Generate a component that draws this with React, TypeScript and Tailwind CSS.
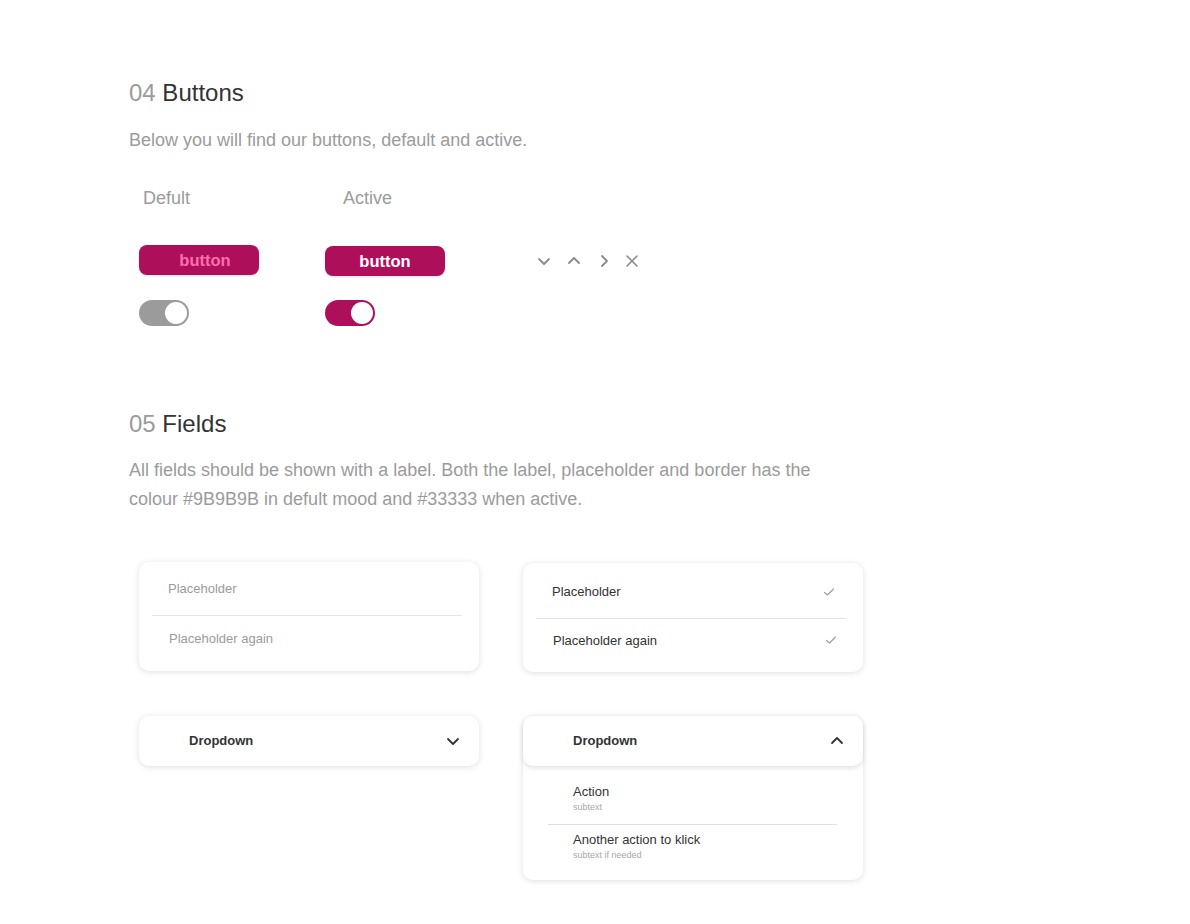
import { ReactNode } from 'react';

const font = "font-['Liberation_Sans',Arial,sans-serif]";

function Chevron({ dir, className = '' }: { dir: 'down' | 'up' | 'right'; className?: string }) {
  const d =
    dir === 'down' ? 'M2 5l5 5 5-5' : dir === 'up' ? 'M2 9l5-5 5 5' : 'M5 2l5 5-5 5';
  return (
    <svg width="14" height="14" viewBox="0 0 14 14" fill="none" className={className}>
      <path d={d} stroke="currentColor" strokeWidth="1.8" strokeLinecap="round" strokeLinejoin="round" />
    </svg>
  );
}

function Close() {
  return (
    <svg width="14" height="14" viewBox="0 0 14 14" fill="none">
      <path d="M2 2l10 10M12 2L2 12" stroke="currentColor" strokeWidth="1.6" strokeLinecap="round" />
    </svg>
  );
}

function Check() {
  return (
    <svg width="12" height="10" viewBox="0 0 12 10" fill="none">
      <path d="M1.5 5.5l3 2.5 6-6" stroke="#9b9b9b" strokeWidth="1.1" strokeLinecap="round" strokeLinejoin="round" />
    </svg>
  );
}

function Toggle({ on }: { on?: boolean }) {
  return (
    <div
      className={`w-[50px] h-[26px] rounded-full flex items-center justify-end pr-[2px] ${
        on ? 'bg-[#ad0f5b]' : 'bg-[#9b9b9b]'
      }`}
    >
      <div className="w-[22px] h-[22px] rounded-full bg-white" />
    </div>
  );
}

function Card({ children, className = '' }: { children: ReactNode; className?: string }) {
  return (
    <div className={`bg-white rounded-[10px] shadow-[0_1px_6px_rgba(0,0,0,0.13)] ${className}`}>
      {children}
    </div>
  );
}

export default function App() {
  return (
    <div className={`min-h-screen bg-white ${font} pl-[129px] pt-[79px] pb-10`}>
      {/* Buttons */}
      <h2 className="text-[24px] leading-[28px] text-[#333]">
        <span className="text-[#9b9b9b]">04</span> Buttons
      </h2>
      <p className="mt-[21px] text-[18px] leading-[24px] text-[#9b9b9b]">
        Below you will find our buttons, default and active.
      </p>

      <div className="mt-[34px] ml-[14px] flex text-[18px] leading-[24px] text-[#9b9b9b]">
        <span className="w-[200px]">Defult</span>
        <span>Active</span>
      </div>

      <div className="mt-[35px] ml-[10px] flex items-start">
        <button className="w-[120px] h-[30px] rounded-[8px] bg-[#ad0f5b] shadow-[0_1px_3px_rgba(0,0,0,0.12)] pl-[12px] text-[16.5px] font-bold text-[#ff6fae]">
          button
        </button>
        <button className="ml-[66px] mt-px w-[120px] h-[30px] rounded-[8px] bg-[#ad0f5b] shadow-[0_1px_3px_rgba(0,0,0,0.12)] text-[16.5px] font-bold text-white">
          button
        </button>
        <div className="ml-[92px] mt-[9px] flex items-center gap-[16px] text-[#8a8a8a]">
          <Chevron dir="down" />
          <Chevron dir="up" />
          <Chevron dir="right" />
          <span className="-ml-[2px]">
            <Close />
          </span>
        </div>
      </div>

      <div className="mt-[24px] ml-[10px] flex">
        <Toggle />
        <div className="ml-[136px]">
          <Toggle on />
        </div>
      </div>

      {/* Fields */}
      <h2 className="mt-[84px] text-[24px] leading-[28px] text-[#333]">
        <span className="text-[#9b9b9b]">05</span> Fields
      </h2>
      <p className="mt-[18px] text-[18px] leading-[29px] text-[#9b9b9b]">
        All fields should be shown with a label. Both the label, placeholder and border has the
        <br />
        colour #9B9B9B in defult mood and #33333 when active.
      </p>

      <div className="mt-[48px] ml-[10px] grid grid-cols-[340px_340px] gap-x-[44px] text-[13px]">
        <Card className="h-[109px] pt-px">
          <div className="h-[52px] flex items-center pl-[29px] text-[#9b9b9b]">Placeholder</div>
          <div className="ml-[13px] mr-[17px] border-t border-[#e5e5e5]" />
          <div className="h-[46px] flex items-center pl-[30px] text-[#9b9b9b]">Placeholder again</div>
        </Card>
        <Card className="h-[109px] mt-px pt-[3px]">
          <div className="h-[52px] flex items-center justify-between pl-[29px] pr-[28px] text-[#333]">
            <span>Placeholder</span>
            <Check />
          </div>
          <div className="ml-[13px] mr-[17px] border-t border-[#e5e5e5]" />
          <div className="h-[44px] flex items-center justify-between pl-[30px] pr-[26px] text-[#333]">
            <span>Placeholder again</span>
            <span className="-mt-[3px]">
              <Check />
            </span>
          </div>
        </Card>

        <Card className="mt-[44px] h-[50px] self-start flex items-center justify-between pl-[50px] pr-[19px]">
          <span className="font-bold text-[#333]">Dropdown</span>
          <Chevron dir="down" className="text-[#333]" />
        </Card>
        <Card className="mt-[44px]">
          <div className="h-[50px] rounded-[10px] bg-white shadow-[0_2px_5px_rgba(0,0,0,0.12)] flex items-center justify-between pl-[50px] pr-[19px]">
            <span className="font-bold text-[#333]">Dropdown</span>
            <Chevron dir="up" className="text-[#333]" />
          </div>
          <div className="pt-[18px] pb-[18px]">
            <div className="pl-[50px] h-[33px] flex flex-col">
              <span className="text-[13px] leading-[16px] text-[#333]">Action</span>
              <span className="text-[9px] leading-[14px] text-[#a8a8a8]">subtext</span>
            </div>
            <div className="ml-[25px] mr-[26px] mt-[7px] border-t border-[#e0e0e0]" />
            <div className="pl-[50px] pt-[7px] flex flex-col">
              <span className="text-[13px] leading-[16px] text-[#333]">Another action to klick</span>
              <span className="text-[9px] leading-[14px] text-[#a8a8a8]">subtext if needed</span>
            </div>
          </div>
        </Card>
      </div>
    </div>
  );
}
